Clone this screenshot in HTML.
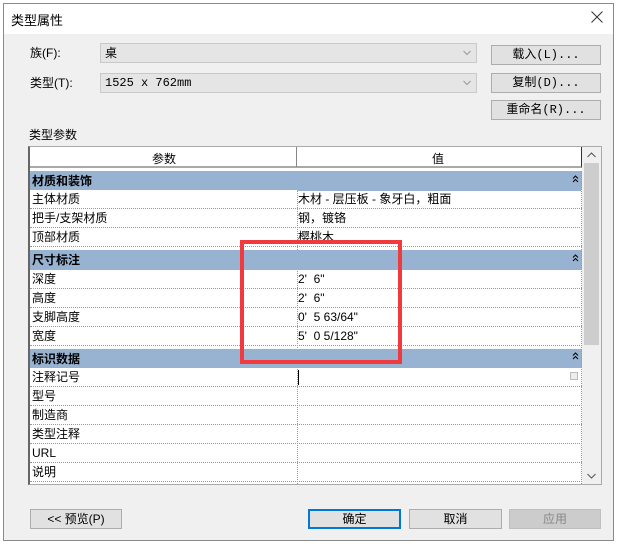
<!DOCTYPE html>
<html><head><meta charset="utf-8"><style>
*{box-sizing:border-box;margin:0;padding:0}
body{width:622px;height:547px;background:#fff;position:relative;overflow:hidden;font-family:"Liberation Sans","Noto Sans CJK SC",sans-serif;font-size:12px;color:#000}
.a{position:absolute}
.win{left:3px;top:3px;width:611px;height:538px;border:1px solid #8a8a8a;background:#f0f0f0}
.title{left:4px;top:4px;width:609px;height:30px;background:#fff}
.combo{background:#e5e5e5;border:1px solid #c9c9c9;height:20px;line-height:18px;padding-left:4px}
.btn{background:#e1e1e1;border:1px solid #adadad;height:20px;line-height:18px;text-align:center}
.mono{font-family:"Liberation Mono","Noto Sans CJK SC",monospace;font-size:12px}
.row{left:30px;width:552px;height:19px;border-bottom:1px dotted #999;background:#fff;line-height:18px}
.row span{position:absolute;left:2px}
.row b{position:absolute;left:268px;font-weight:normal}
.grp{left:30px;width:552px;height:20px;background:#98b3d2;font-weight:bold;line-height:20px;padding-left:2px}
</style></head><body>
<div class="a win"></div>
<div class="a title"></div>
<div class="a" style="left:11px;top:10px;font-size:13px">类型属性</div>
<svg class="a" style="left:591px;top:11px" width="12" height="12"><path d="M0.5 0.5L11.5 11.5M11.5 0.5L0.5 11.5" stroke="#333" stroke-width="1"/></svg>

<div class="a" style="left:30px;top:44px">族(F):</div>
<div class="a combo" style="left:100px;top:43px;width:377px">桌</div>
<svg class="a" style="left:463px;top:50px" width="8" height="6"><path d="M0.5 1L4 4.5L7.5 1" stroke="#999" fill="none"/></svg>
<div class="a btn mono" style="left:491px;top:45px;width:110px">载入(L)...</div>
<div class="a" style="left:30px;top:74px">类型(T):</div>
<div class="a combo mono" style="left:100px;top:73px;width:377px">1525 x 762mm</div>
<svg class="a" style="left:463px;top:80px" width="8" height="6"><path d="M0.5 1L4 4.5L7.5 1" stroke="#999" fill="none"/></svg>
<div class="a btn mono" style="left:491px;top:73px;width:110px">复制(D)...</div>
<div class="a btn mono" style="left:491px;top:100px;width:110px">重命名(R)...</div>
<div class="a" style="left:29px;top:126px">类型参数</div>

<div class="a" style="left:28px;top:146px;width:574px;height:339px;border:1px solid #aaa;border-left:2px solid #666;background:#fff"></div>
<div class="a" style="left:30px;top:147px;width:552px;height:21px;border-bottom:2px solid #a9a9a9;border-right:1px solid #333;background:#fff"></div>
<div class="a" style="left:296px;top:147px;width:1px;height:20px;background:#888"></div>
<div class="a" style="left:152px;top:150px">参数</div>
<div class="a" style="left:432px;top:150px">值</div>
<div class="a" style="left:582px;top:147px;width:19px;height:337px;background:#f0f0f0"></div>
<div class="a" style="left:584px;top:163px;width:15px;height:182px;background:#cdcdcd"></div>
<svg class="a" style="left:587px;top:152px" width="9" height="6"><path d="M0.5 5L4.5 1L8.5 5" stroke="#555" fill="none"/></svg>
<svg class="a" style="left:587px;top:473px" width="9" height="6"><path d="M0.5 1L4.5 5L8.5 1" stroke="#555" fill="none"/></svg>

<div class="a grp" style="top:171px">材质和装饰</div>
<div class="a row" style="top:190px"><span>主体材质</span><b>木材 - 层压板 - 象牙白，粗面</b></div>
<div class="a row" style="top:209px"><span>把手/支架材质</span><b>钢，镀铬</b></div>
<div class="a row" style="top:228px"><span>顶部材质</span><b>樱桃木</b></div>
<div class="a grp" style="top:250px">尺寸标注</div>
<div class="a row" style="top:270px"><span>深度</span><b>2'&nbsp; 6"</b></div>
<div class="a row" style="top:289px"><span>高度</span><b>2'&nbsp; 6"</b></div>
<div class="a row" style="top:308px"><span>支脚高度</span><b>0'&nbsp; 5 63/64"</b></div>
<div class="a row" style="top:327px"><span>宽度</span><b>5'&nbsp; 0 5/128"</b></div>
<div class="a grp" style="top:349px">标识数据</div>
<div class="a row" style="top:368px"><span>注释记号</span><b style="left:268px;top:2px;width:1px;height:15px;background:#000"></b><em style="position:absolute;right:4px;top:4px;width:8px;height:8px;border:1px solid #bbb;background:#eee"></em></div>
<div class="a row" style="top:387px"><span>型号</span></div>
<div class="a row" style="top:406px"><span>制造商</span></div>
<div class="a row" style="top:425px"><span>类型注释</span></div>
<div class="a row" style="top:444px"><span>URL</span></div>
<div class="a row" style="top:463px"><span>说明</span></div>
<div class="a" style="left:297px;top:171px;width:0;height:313px;border-left:1px dotted #999"></div>
<div class="a" style="left:581px;top:171px;width:0;height:313px;border-left:1px dotted #999"></div>
<div class="a" style="left:297px;top:171px;width:284px;height:20px;background:#98b3d2"></div>
<div class="a" style="left:297px;top:250px;width:284px;height:20px;background:#98b3d2"></div>
<div class="a" style="left:297px;top:349px;width:284px;height:19px;background:#98b3d2"></div>
<svg class="a" style="left:572px;top:175px" width="7" height="8"><path d="M1 3.5L3.5 1L6 3.5M1 7L3.5 4.5L6 7" stroke="#000" fill="none"/></svg>
<svg class="a" style="left:572px;top:254px" width="7" height="8"><path d="M1 3.5L3.5 1L6 3.5M1 7L3.5 4.5L6 7" stroke="#000" fill="none"/></svg>
<svg class="a" style="left:572px;top:352px" width="7" height="8"><path d="M1 3.5L3.5 1L6 3.5M1 7L3.5 4.5L6 7" stroke="#000" fill="none"/></svg>

<div class="a" style="left:240px;top:240px;width:162px;height:124px;border:4px solid #f03a3e"></div>

<div class="a btn" style="left:30px;top:509px;width:92px">&lt;&lt; 预览(P)</div>
<div class="a btn" style="left:308px;top:509px;width:93px;border:2px solid #0078d7;line-height:16px">确定</div>
<div class="a btn" style="left:409px;top:509px;width:93px">取消</div>
<div class="a btn" style="left:509px;top:509px;width:92px;background:#ccc;border-color:#bfbfbf;color:#888">应用</div>
</body></html>
